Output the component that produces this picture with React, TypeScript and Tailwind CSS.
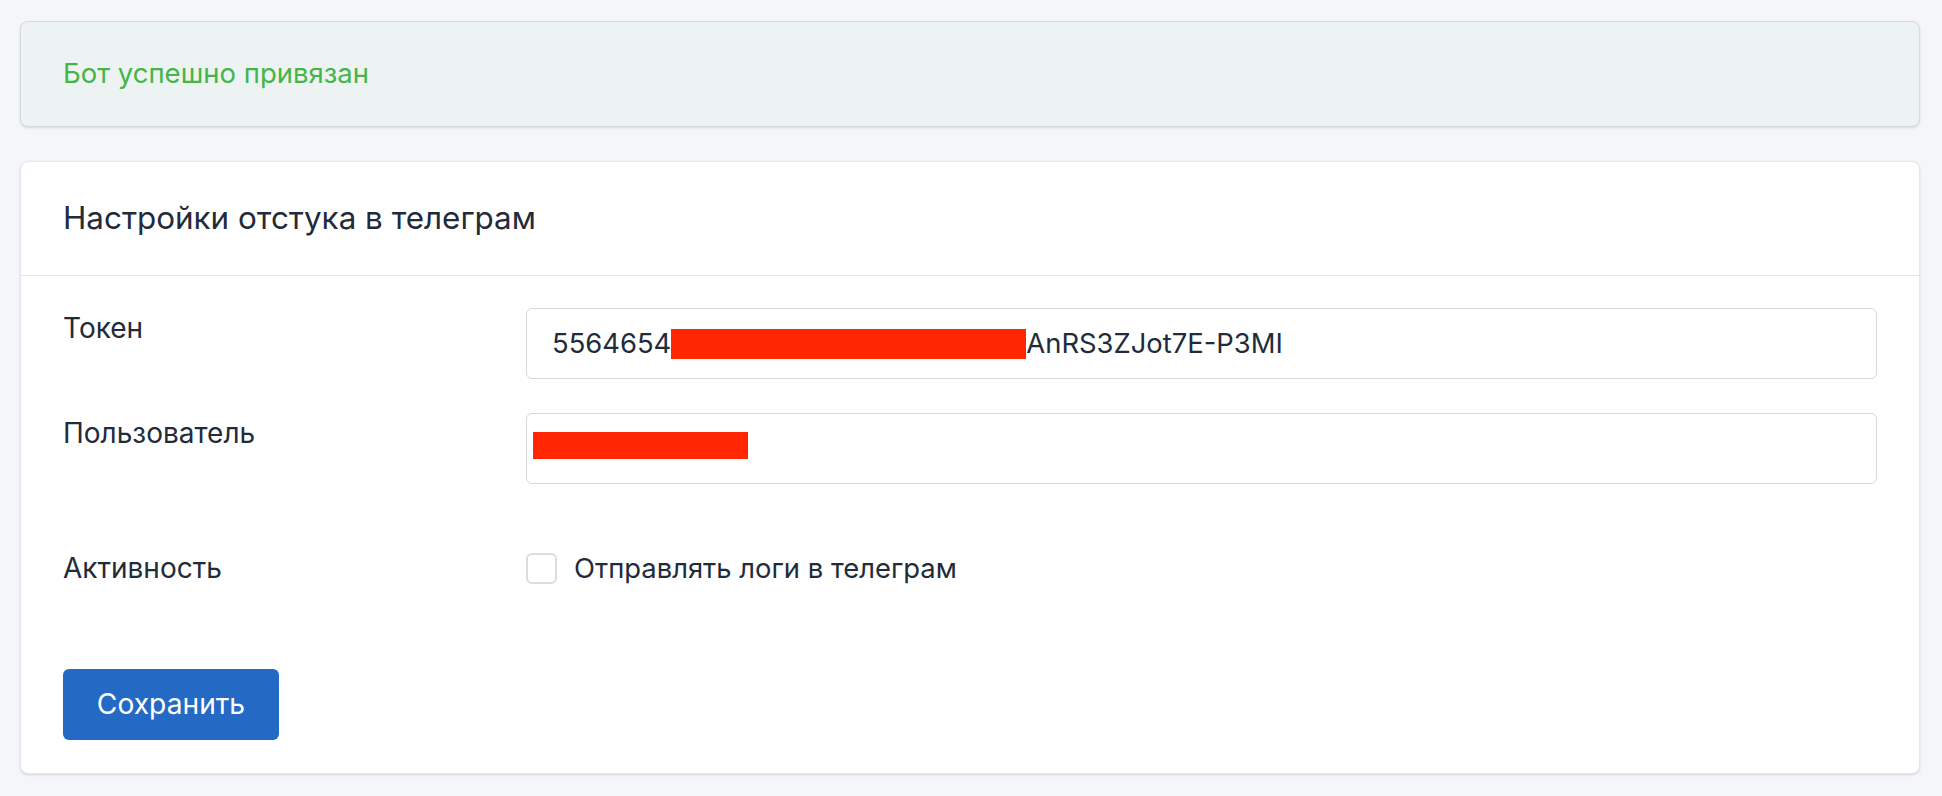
import React from "react";

const font = "font-['Inter','Noto_Sans',sans-serif]";

const App = () => {
    return (
        <div className={`min-h-screen bg-[#f4f6f9] pl-5 pr-[22px] pt-[21px] pb-6 text-[#222b3a] ${font}`}>
            {/* уведомление */}
            <div className="flex h-[106px] items-center rounded-lg border border-[#d5dbdc] bg-[#edf3f3] px-[42px] text-[27.5px] text-[#45b549] shadow-sm">
                Бот успешно привязан
            </div>

            <div className="mt-[34px] rounded-lg border border-[#e3e6ea] bg-white shadow-sm">
                <div className="flex h-[114px] items-center border-b border-[#e3e6ea] px-[42px] text-[31.4px]">
                    Настройки отстука в телеграм
                </div>

                <div className="px-[42px] pt-[32px] pb-[33px] text-[28px]">
                    <div className="grid grid-cols-[463px_1fr] gap-y-[34px]">
                        <label className="leading-[40px]">Токен</label>
                        <div className="flex h-[71px] items-center rounded-[6px] border border-[#d5dadf] pl-[25px] text-[27.4px]">
                            <span>5564654</span>
                            <span className="inline-block h-[30px] w-[355px] bg-[#ff2600]"></span>
                            <span>AnRS3ZJot7E-P3MI</span>
                        </div>

                        <label className="leading-[40px]">Пользователь</label>
                        <div className="relative h-[71px] rounded-[6px] border border-[#d5dadf]">
                            <span className="absolute top-[18px] left-[6px] h-[27px] w-[215px] bg-[#ff2600]"></span>
                        </div>
                    </div>

                    <div className="mt-[64px] grid grid-cols-[463px_1fr] items-center">
                        <label className="leading-[40px]">Активность</label>
                        <label className="flex items-center gap-[17px] text-[27.4px]">
                            <span className="inline-block h-[31px] w-[31px] rounded-[6px] border-2 border-[#d8dde2] bg-white"></span>
                            <span className="leading-[40px]">Отправлять логи в телеграм</span>
                        </label>
                    </div>

                    <button className="mt-[81px] flex h-[71px] w-[216px] items-center justify-center rounded-[6px] bg-[#2469c4] text-[28.2px] text-white">
                        Сохранить
                    </button>
                </div>
            </div>
        </div>
    );
};

export default App;
